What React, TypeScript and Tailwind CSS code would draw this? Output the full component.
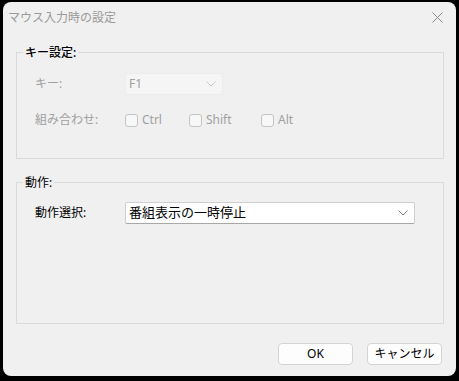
import React from "react";

const font = { fontFamily: '"Noto Sans", "Noto Sans CJK JP", sans-serif' };

function Chevron({ color }: { color: string }) {
  return (
    <svg width="10" height="6" viewBox="0 0 10 6" fill="none">
      <path d="M0.5 0.5 L5 5 L9.5 0.5" stroke={color} strokeWidth="1" />
    </svg>
  );
}

function Check({ label }: { label: string }) {
  return (
    <div className="flex items-center gap-[4px]">
      <div className="w-[13px] h-[13px] rounded-[3px] border border-[#c4c4c4] bg-[#f7f7f7]" />
      <span className="text-[12px] text-[#a0a0a0]">{label}</span>
    </div>
  );
}

export default function App() {
  return (
    <div
      className="w-[459px] h-[381px] bg-black pt-[2px] pl-[3px] pr-[3px] pb-[5px]"
      style={font}
    >
      <div className="h-full bg-[#f0f0f0] rounded-[8px] flex flex-col">
        <div className="h-[30px] flex items-center justify-between pl-[5px] pr-[13px]">
          <span className="text-[12px] text-[#9a9a9a] mt-[1px]">マウス入力時の設定</span>
          <svg width="11" height="11" viewBox="0 0 11 11" fill="none">
            <path d="M0.5 0.5 L10.5 10.5 M10.5 0.5 L0.5 10.5" stroke="#8a8a8a" strokeWidth="1" />
          </svg>
        </div>

        <div className="relative mt-[20px] ml-[13px] mr-[12px] h-[107px] border border-[#dadada]">
          <span className="absolute -top-[9px] left-[6px] px-[2px] bg-[#f0f0f0] text-[12px] text-black font-medium">
            キー設定:
          </span>
          <div className="pl-[18px] pt-[20px] flex flex-col">
            <div className="flex items-center h-[22px]">
              <span className="w-[90px] text-[12px] text-[#a0a0a0]">キー:</span>
              <div className="w-[98px] h-[22px] bg-[#f5f5f5] border border-[#ececec] rounded-[2px] flex items-center justify-between pl-[3px] pr-[6px]">
                <span className="text-[12px] text-[#a0a0a0]">F1</span>
                <Chevron color="#c8c8c8" />
              </div>
            </div>
            <div className="flex items-center h-[14px] mt-[18px]">
              <span className="w-[90px] text-[12px] text-[#a0a0a0]">組み合わせ:</span>
              <div className="w-[64px]"><Check label="Ctrl" /></div>
              <div className="w-[72px]"><Check label="Shift" /></div>
              <Check label="Alt" />
            </div>
          </div>
        </div>

        <div className="relative mt-[23px] ml-[13px] mr-[12px] h-[142px] border border-[#dadada]">
          <span className="absolute -top-[9px] left-[6px] px-[2px] bg-[#f0f0f0] text-[12px] text-black">
            動作:
          </span>
          <div className="pl-[18px] pt-[19px] flex items-center">
            <span className="w-[90px] text-[12px] text-black">動作選択:</span>
            <div className="w-[290px] h-[22px] bg-white border border-[#cfcfcf] border-b-[#a8a8a8] rounded-[2px] flex items-center justify-between pl-[3px] pr-[6px]">
              <span className="text-[13px] text-black">番組表示の一時停止</span>
              <Chevron color="#808080" />
            </div>
          </div>
        </div>

        <div className="flex justify-end gap-[14px] mt-[19px] mr-[14px]">
          <button className="w-[75px] h-[22px] bg-[#fdfdfd] border border-[#d4d4d4] rounded-[4px] text-[12px] text-black flex items-center justify-center">
            OK
          </button>
          <button className="w-[75px] h-[22px] bg-[#fdfdfd] border border-[#d4d4d4] rounded-[4px] text-[12px] text-black flex items-center justify-center">
            キャンセル
          </button>
        </div>
      </div>
    </div>
  );
}
